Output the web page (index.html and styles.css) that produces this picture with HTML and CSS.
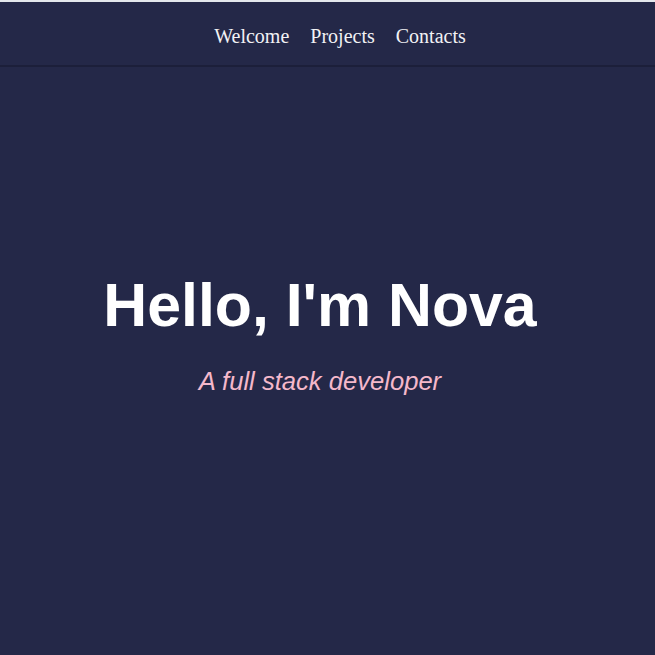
FILE: index.html
```html
<!DOCTYPE html>
<html lang="en">
<head>
<meta charset="utf-8">
<title>Nova</title>
<link rel="stylesheet" href="styles.css">
</head>
<body>
<div class="topstrip"></div>
<header class="site-header">
  <nav class="inner">
    <ul class="nav-list">
      <li><a href="#welcome">Welcome</a></li>
      <li><a href="#projects">Projects</a></li>
      <li><a href="#contacts">Contacts</a></li>
    </ul>
  </nav>
</header>
<section class="hero inner" id="welcome">
  <h1 class="hero-title">Hello, I'm Nova</h1>
  <p class="hero-sub">A full stack developer</p>
</section>
</body>
</html>
```
FILE: styles.css
```css
html, body {
  margin: 0;
  padding: 0;
}
body {
  background: #242848;
  min-height: 655px;
}
.topstrip {
  height: 2px;
  background: #e3e7ec;
}
.inner {
  width: 640px;
}
.site-header {
  padding: 23px 0 17px;
  border-bottom: 2px solid #1c1f3a;
}
.nav-list {
  list-style: none;
  margin: 0;
  padding: 0 0 0 40px;
  display: flex;
  justify-content: center;
}
.nav-list li {
  margin: 0 10.5px;
}
.nav-list a {
  font-family: "Liberation Serif", "Times New Roman", serif;
  font-size: 20px;
  color: #f2f2f5;
  text-decoration: none;
}
.hero {
  padding-top: 203px;
  text-align: center;
}
.hero-title {
  margin: 0;
  font-family: "Liberation Sans", Arial, sans-serif;
  font-weight: bold;
  font-size: 60.8px;
  color: #ffffff;
}
.hero-sub {
  margin: 27px 0 0;
  font-family: "Liberation Sans", Arial, sans-serif;
  font-style: italic;
  font-size: 25.6px;
  color: #f5b8cb;
}
```
